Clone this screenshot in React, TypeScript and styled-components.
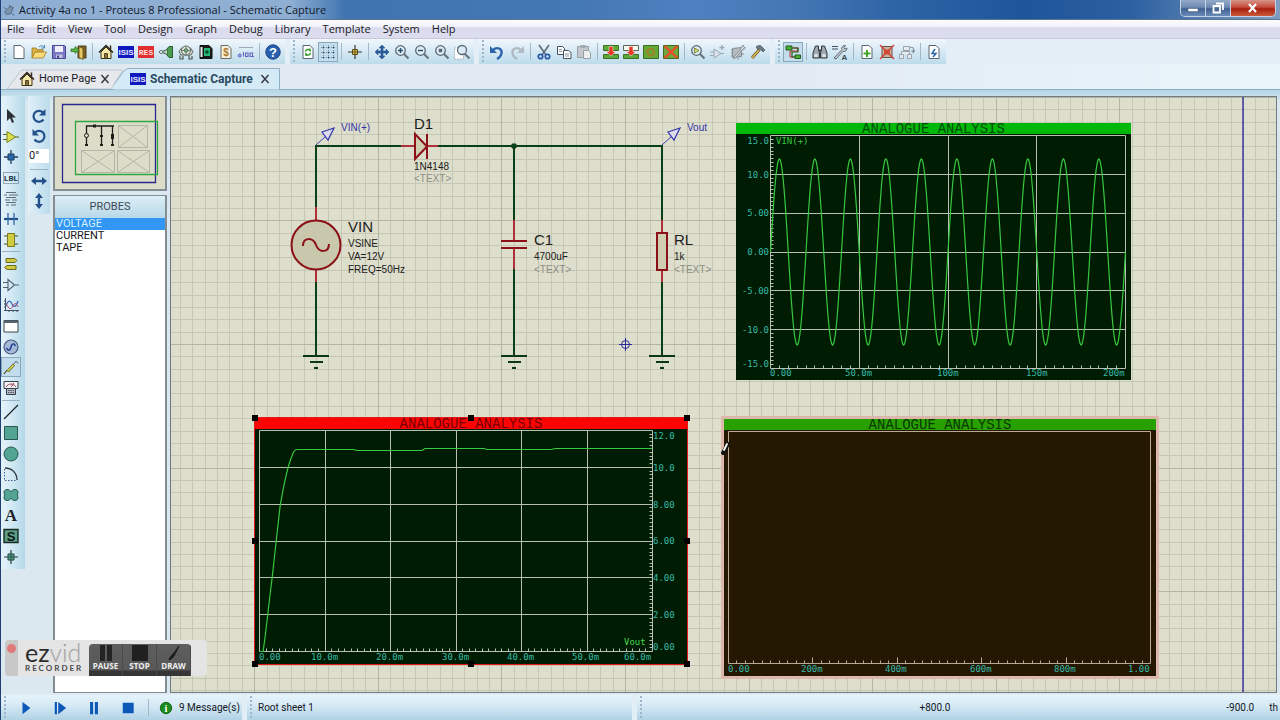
import React from "react";
import styled, { createGlobalStyle, css } from "styled-components";

const ui = `"Open Sans", "Noto Sans", sans-serif`;
const narrow = `Roboto, "Liberation Sans", sans-serif`;
const sheetFont = `"Liberation Sans", Arial, sans-serif`;

const GlobalStyle = createGlobalStyle`
  * { box-sizing: border-box; }
  html, body { margin: 0; padding: 0; }
  body { background: #dfeaf2; font-family: ${ui}; font-size: 12px; color: #141826; }
  button, input { font: inherit; color: inherit; margin: 0; padding: 0; border: 0; background: none; }
  svg { display: block; }
`;

const Window = styled.div`
  position: relative;
  display: flex;
  flex-direction: column;
  min-height: 100vh;
  border-left: 1px solid #1f3f74;
  overflow: hidden;
`;

const TitleBar = styled.header`
  position: relative;
  display: flex;
  align-items: center;
  height: 20px;
  padding-left: 1px;
  gap: 3px;
  border-bottom: 1px solid #5b7492;
  background: linear-gradient(90deg, #8fb0d4 0, #8eaed2 290px, #3f74b0 345px, #4478b4 45%, #4f80c0 54%, #4577b4 62%, #2d64a6 70%, #1f569a 80%, #2a5fa0 88%, #7f9cc0 100%);
`;
const TitleText = styled.h1`
  margin: 0;
  font-size: 11px;
  line-height: 18px;
  font-weight: 400;
  font-family: ${ui};
  color: #10182a;
`;
const WindowControls = styled.div`
  display: flex;
  align-self: flex-start;
  margin-left: auto;
  margin-right: 4px;
  border: 1px solid #c4d2e4;
  border-top: 0;
  border-radius: 0 0 5px 5px;
  overflow: hidden;
`;
const ControlButton = styled.button<{ $close?: boolean }>`
  display: grid;
  place-items: center;
  height: 16px;
  width: ${(p) => (p.$close ? 44 : 25)}px;
  border-right: ${(p) => (p.$close ? 0 : "1px solid #c4d2e4")};
  background: ${(p) =>
    p.$close
      ? "linear-gradient(#d79488, #c4493a 45%, #a8200f 55%, #cc5a3a)"
      : "linear-gradient(#93a9c8, #6f8bb4 45%, #405f92 55%, #6a8cb8)"};
`;

const MenuBar = styled.nav`
  display: flex;
  height: 19px;
  align-items: center;
  padding-left: 6px;
  gap: 12px;
  background: linear-gradient(#fcfcfe 0, #f2f2fa 35%, #dadcee 45%, #dcdef0 100%);
  border-bottom: 1px solid #c8c8da;
`;
const MenuItem = styled.button`
  font-size: 11px;
  line-height: 18px;
  font-family: ${ui};
  color: #1a1a24;
`;

const ToolRow = styled.div`
  display: flex;
  gap: 5px;
  height: 25px;
  background: #e4eef6;
`;
const dots = css`
  background-image: radial-gradient(circle, #9fb6c8 1px, transparent 1px);
  background-size: 4px 4px;
`;
const Grip = styled.span`
  flex: none;
  width: 4px;
  height: 100%;
  margin: 0 2px;
  ${dots}
`;
const ToolGroup = styled.div`
  display: flex;
  align-items: center;
  padding-right: 2px;
  background: linear-gradient(#f0f7fc 0, #d8eaf5 45%, #bddbea 100%);
`;
const ToolButton = styled.button<{ $pressed?: boolean }>`
  display: grid;
  place-items: center;
  width: 20px;
  height: 20px;
  flex: none;
  ${(p) => p.$pressed && css`background: #c3ddec; box-shadow: inset 0 0 0 1px #8aa8bc;`}
`;
const Divider = styled.span`
  flex: none;
  width: 1px;
  height: 17px;
  margin: 0 3px;
  background: #a3b8c6;
`;

const TabRow = styled.div`
  display: flex;
  align-items: flex-end;
  height: 26px;
  padding-left: 6px;
  background: linear-gradient(90deg, #dfe8ef, #e2ebf3 60%, #eaf4fb);
  border-bottom: 1px solid #8fb0c4;
`;
const Tab = styled.div<{ $active?: boolean }>`
  position: relative;
  display: flex;
  align-items: center;
  justify-content: space-between;
  height: ${(p) => (p.$active ? 22 : 20)}px;
  width: ${(p) => (p.$active ? 166 : 107)}px;
  padding-left: ${(p) => (p.$active ? 16 : 12)}px;
  padding-right: ${(p) => (p.$active ? 8 : 2)}px;
  margin-bottom: ${(p) => (p.$active ? -1 : 0)}px;
`;
const TabShape = styled.svg`
  position: absolute;
  inset: 0;
`;
const TabLabel = styled.button<{ $active?: boolean }>`
  position: relative;
  display: flex;
  align-items: center;
  gap: 4px;
  font-family: ${narrow};
  font-size: ${(p) => (p.$active ? 12 : 11)}px;
  line-height: 18px;
  font-weight: ${(p) => (p.$active ? 700 : 400)};
  color: ${(p) => (p.$active ? "#2a4a60" : "#1c2028")};
  white-space: nowrap;
`;
const CloseTab = styled.button`
  position: relative;
  display: grid;
  place-items: center;
  width: 14px;
  height: 14px;
`;

const Workspace = styled.main`
  display: flex;
  flex: 1;
  min-height: 560px;
  padding-top: 6px;
  background: linear-gradient(#b4d6e6 0, #c4dcea 5px, #dce8f0 12px);
`;
const ModeStrip = styled.div`
  display: flex;
  flex-direction: column;
  justify-content: space-between;
  align-items: center;
  align-self: flex-start;
  width: 24px;
  height: 473px;
  padding: 10px 4px 2px 0;
  background: linear-gradient(90deg, #e4f2fa 0, #d4eaf5 40%, #b4d8e8 100%);
`;
const StripRule = styled.span`
  width: 18px;
  height: 1px;
  flex: none;
  margin: 1px 0;
  background: #98b4c4;
`;
const RotateStrip = styled.div`
  display: flex;
  flex-direction: column;
  align-items: center;
  align-self: flex-start;
  width: 22px;
  margin: 0 3px;
  padding: 10px 0 3px;
  background: linear-gradient(90deg, #e0f0f8, #bcdcec);
`;
const AngleInput = styled.input`
  width: 20px;
  height: 14px;
  margin: 3px 0 5px;
  background: #fff;
  font-family: ${narrow};
  font-size: 11px;
  line-height: 14px;
`;

const SidePanel = styled.aside`
  display: flex;
  flex-direction: column;
  width: 114px;
  gap: 4px;
`;
const Overview = styled.div`
  height: 95px;
  border: 1px solid #848c94;
  border-width: 1px 2px 2px;
  background: #dcdcc8;
`;
const PickList = styled.section`
  flex: 1;
  display: flex;
  flex-direction: column;
  border: 1px solid #848c94;
  border-width: 1px 2px;
  background: #fff;
`;
const PickHeader = styled.h2`
  margin: 0;
  height: 22px;
  font-family: ${narrow};
  font-size: 11px;
  line-height: 21px;
  font-weight: 400;
  text-align: center;
  color: #3e4854;
  background: linear-gradient(#dceef7, #b8d8e8);
`;
const PickItem = styled.button<{ $selected?: boolean }>`
  display: block;
  width: 100%;
  height: 12px;
  padding-left: 1px;
  text-align: left;
  font-family: ${narrow};
  font-size: 11px;
  line-height: 12px;
  color: ${(p) => (p.$selected ? "#d8f0ff" : "#16161a")};
  background: ${(p) => (p.$selected ? "#3296f4" : "transparent")};
`;

const Sheet = styled.section`
  position: relative;
  flex: 1;
  margin: 0 3px;
  border: 1px solid #707a80;
  background: #dedecc;
  overflow: hidden;
`;
const SheetDrawing = styled.svg`
  position: absolute;
  inset: 0;
  font-family: ${sheetFont};
`;

type Tone = { bar: string; ink: string; back: string; edge?: string; halo?: string };
const GraphBox = styled.figure<{ $x: number; $y: number; $w: number; $tone: Tone }>`
  position: absolute;
  left: ${(p) => p.$x}px;
  top: ${(p) => p.$y}px;
  width: ${(p) => p.$w}px;
  margin: 0;
  background: ${(p) => p.$tone.back};
  ${(p) => p.$tone.edge && css`outline: 1px solid ${p.$tone.edge};`}
  ${(p) => p.$tone.halo && css`box-shadow: 0 0 0 3px ${p.$tone.halo};`}
`;
const GraphTitle = styled.figcaption<{ $tone: Tone }>`
  height: 11px;
  font-family: "Liberation Mono", monospace;
  font-size: 14px;
  line-height: 12px;
  text-align: center;
  color: ${(p) => p.$tone.ink};
  background: ${(p) => p.$tone.bar};
`;
const Plot = styled.svg`
  overflow: visible;
  font-family: "DejaVu Sans Mono", monospace;
  font-size: 9px;
`;
const Handle = styled.span<{ $x: number; $y: number }>`
  position: absolute;
  left: ${(p) => p.$x}%;
  top: ${(p) => p.$y}%;
  width: 6px;
  height: 6px;
  margin: -3px 0 0 -3px;
  background: #000;
`;

const StatusBar = styled.footer`
  display: flex;
  height: 25px;
  margin-top: 2px;
  background: #e2eef6;
  font-family: ${narrow};
  font-size: 12px;
`;
const StatusPane = styled.div<{ $w?: number }>`
  display: flex;
  align-items: center;
  flex: ${(p) => (p.$w ? "none" : "1")};
  width: ${(p) => (p.$w ? p.$w + "px" : "auto")};
  margin-right: ${(p) => (p.$w ? 5 : 0)}px;
  background: linear-gradient(#e6f4fb 0, #d4e8f4 45%, #b0d2e4 100%);
`;
const SimButton = styled.button`
  display: grid;
  place-items: center;
  flex: none;
  width: 34px;
  height: 20px;
`;
const MessageButton = styled.button`
  display: flex;
  align-items: center;
  gap: 6px;
  margin-left: 7px;
  font-size: 10px;
  white-space: nowrap;
`;
const StatusText = styled.span<{ $gap?: number }>`
  font-size: 10px;
  margin-left: 3px;
  margin-right: ${(p) => p.$gap ?? 0}px;
  white-space: nowrap;
`;
const Coordinates = styled.div`
  display: flex;
  flex: 1;
  align-items: center;
  justify-content: flex-end;
`;

const Recorder = styled.div`
  position: absolute;
  left: 4px;
  bottom: 44px;
  display: flex;
  width: 202px;
  height: 36px;
  border-radius: 4px;
  background: #e4e4e4;
  overflow: hidden;
`;
const RecordLamp = styled.div`
  width: 13px;
  background: #c8c8c8;
  padding: 4px 2px;
`;
const Lamp = styled.span`
  display: block;
  width: 9px;
  height: 9px;
  border-radius: 50%;
  background: #e27a7c;
`;
const Brand = styled.div`
  width: 71px;
  padding-left: 7px;
  font-family: Lato, sans-serif;
  color: #2c2c2c;
`;
const BrandName = styled.div`
  font-size: 25px;
  line-height: 24px;
  height: 24px;
  span { color: #a0a0a0; font-weight: 300; }
`;
const BrandSub = styled.div`
  font-size: 8px;
  line-height: 8px;
  font-weight: 700;
  letter-spacing: 2px;
  color: #4a4a4a;
`;
const RecorderKeys = styled.div`
  display: flex;
  height: 32px;
  margin-top: 4px;
  border-radius: 4px 4px 0 0;
  background: linear-gradient(#5e5e5e 0, #585858 26px, #363636 27px);
  overflow: hidden;
`;
const RecorderKey = styled.button`
  display: flex;
  flex-direction: column;
  align-items: center;
  width: 34px;
  padding-top: 1px;
  font-family: "Open Sans", sans-serif;
  font-size: 8px;
  line-height: 9px;
  font-weight: 700;
  color: #f0f0f0;
  border-right: 1px solid #4a4a4a;
`;

/* ---------- icons, all on a 16 x 16 box ---------- */

const IconSvg = styled.svg`
  overflow: visible;
`;
const Ico = ({ children, size = 16 }: { children: React.ReactNode; size?: number }) => (
  <IconSvg width={size} height={size} viewBox="0 0 16 16" fill="none" aria-hidden="true">
    {children}
  </IconSvg>
);
const page = <path d="M3 1.5h7l3 3v10H3z" fill="#fff" stroke="#5a6670" />;
const lens = (
  <>
    <path d="M9.5 9.5l5 5" stroke="#6a7680" strokeWidth="2.2" />
    <circle cx="6.5" cy="6.5" r="4.8" fill="#dcecf4" stroke="#5c6a76" strokeWidth="1.3" />
  </>
);
const badge = (text: string, y: number, size: number, fill: string, family = "Liberation Sans") => (
  <text x="8" y={y} fontSize={size} fontWeight="700" fontFamily={family} textAnchor="middle" fill={fill}>
    {text}
  </text>
);

const icons: Record<string, React.ReactNode> = {
  new: page,
  open: (
    <>
      <path d="M1 4h4l1.500 1.500H12V8H5l-4 6z" fill="#d8b048" stroke="#a07820" strokeWidth=".8" />
      <path d="M4 8h11.500l-3.500 6H1z" fill="#f8dc78" stroke="#a07820" strokeWidth=".8" />
      <path d="M8 3c2-2 4-1.500 5 .5M13.500 1v3h-3" stroke="#4080b0" />
    </>
  ),
  save: (
    <>
      <path d="M1.500 1.500h12l1 1v12h-13z" fill="#7a78c4" stroke="#4a4890" />
      <path d="M4 2h8v6H4z" fill="#eef0fa" />
      <path d="M5 10.500h6.500V14H5z" fill="#c0c4e0" />
      <path d="M6 11.500h2V14H6z" fill="#4a4890" />
    </>
  ),
  exit: (
    <>
      <path d="M7 2h8v12H7z" fill="#7a6428" stroke="#4c3c14" />
      <path d="M8 2.500l4 2v11l-4-2z" fill="#e8c860" stroke="#5c4a18" strokeWidth=".8" />
      <path d="M0 5h4V2.500L8 6 4 9.500V7.500H0z" fill="#58b840" stroke="#2e7020" strokeWidth=".8" />
    </>
  ),
  home: (
    <>
      <path d="M3 8v6.500h10V8L8 3z" fill="#f4e8a8" stroke="#3a3018" />
      <path d="M1 8.500l7-7 7 7" stroke="#2a2416" strokeWidth="1.500" />
      <path d="M12.500 1.500v4" stroke="#3a3018" strokeWidth="1.500" />
      <path d="M6.500 9.500h3v5h-3z" fill="#8a6c38" stroke="#3a3018" strokeWidth=".8" />
    </>
  ),
  isis: (
    <>
      <path d="M0 2h16v12H0z" fill="#1018c0" />
      {badge("ISIS", 11, 8, "#e4e8ff")}
    </>
  ),
  ares: (
    <>
      <path d="M0 2h16v12H0z" fill="#e03030" />
      {badge("RES", 11, 8, "#ffdcdc", "Liberation Mono")}
    </>
  ),
  viewer: (
    <>
      <path d="M11 2.500h3.500v11H11l-2-2.500V5z" fill="#4c9c50" stroke="#2c5c30" />
      <path d="M9 5.500L3 8l6 2.500" fill="#b8ccc0" stroke="#4c5c54" />
      <path d="M1 8c1.500-2 3-2 4 0-1 2-2.500 2-4 0z" fill="#e8f0f0" stroke="#3c4c54" />
    </>
  ),
  gerber: (
    <>
      <path d="M4 3.500h8l3 4-2 3.500H3L1 7.500z" fill="#d4dcd4" stroke="#5c645c" />
      <circle cx="8" cy="6.500" r="4.500" fill="#e0e4e0" stroke="#5c645c" />
      <path d="M8 2v9M3.500 6.500h9" stroke="#6c7c6c" strokeWidth=".9" />
      <circle cx="8" cy="6.500" r="1.800" fill="#7cb484" stroke="#3c5c3c" strokeWidth=".8" />
      <path d="M2 11.500v3.500h3v-3M11 11.500v3.500h3v-3" stroke="#4c544c" strokeWidth="1.200" />
    </>
  ),
  explorer: (
    <>
      <path d="M2 1.500h9l3 3v10H2z" fill="#151a18" stroke="#101010" />
      <path d="M6 4h6v8H6z" fill="#28b878" />
      <circle cx="9" cy="8" r="1.800" fill="#08482c" />
      <path d="M2.500 3h2v10h-2z" fill="#e8ece8" />
    </>
  ),
  bom: (
    <>
      <path d="M3 1.500h7l3 3v10H3z" fill="#f4f0e0" stroke="#6a6a60" />
      {badge("$", 12, 10, "#b07828")}
    </>
  ),
  code: (
    <>
      <path d="M1 3.500h14" stroke="#a0a8b4" />
      <path d="M0 12.500c1-3 3-3 3-1s-2 2-2 0M5.500 8v4.500M7.500 9h2.500v3.500H7.500zM12 9h2.500v3.500H12zM12 12.500h4" stroke="#6468c0" strokeWidth="1.100" />
    </>
  ),
  help: (
    <>
      <circle cx="8" cy="8" r="7.200" fill="#2860b0" stroke="#184080" />
      {badge("?", 12.5, 13, "#fff")}
    </>
  ),
  refresh: (
    <>
      {page}
      <path d="M5.500 7.500c.5-2 3-2.800 4.500-1V4.500M10.500 9c-.5 2-3 2.800-4.500 1v2" stroke="#3c9c30" strokeWidth="1.500" />
    </>
  ),
  grid: (
    <>
      <path d="M1 3.500h14M1 8.500h14M1 13.500h14M3.500 1v14M8.500 1v14M13.500 1v14" stroke="#7c98b0" strokeDasharray="1 1.500" />
      <path d="M3 3h1v1H3zM8 3h1v1H8zM13 3h1v1h-1zM3 8h1v1H3zM8 8h1v1H8zM13 8h1v1h-1zM3 13h1v1H3zM8 13h1v1H8zM13 13h1v1h-1z" fill="#1c3450" stroke="#1c3450" strokeWidth=".4" />
    </>
  ),
  origin: (
    <>
      <path d="M8 1v14M1 8h14" stroke="#3c3828" strokeWidth="1.200" />
      <path d="M5.500 5.500h5v5h-5z" fill="#d8b848" stroke="#5c4c18" />
      <path d="M8 6v4M6 8h4" stroke="#5c4c18" strokeWidth=".8" />
    </>
  ),
  pan: (
    <path d="M8 1l3 3H9v3h3V5l3 3-3 3V9H9v3h2l-3 3-3-3h2V9H4v2L1 8l3-3v2h3V4H5z" fill="#2a5c98" stroke="#2a5c98" strokeWidth=".6" />
  ),
  zoomIn: <>{lens}<path d="M4 6.500h5M6.500 4v5" stroke="#2c4c6c" strokeWidth="1.400" /></>,
  zoomOut: <>{lens}<path d="M4 6.500h5" stroke="#2c4c6c" strokeWidth="1.400" /></>,
  zoomAll: <>{lens}<path d="M4.800 4.800h3.400v3.400H4.800z" fill="#56646e" /></>,
  zoomArea: (
    <>
      <path d="M.5 4h9v11h-9z" fill="#fff" stroke="#a0acb4" strokeDasharray="1.500 1" />
      <path d="M10.500 9.500l5 5" stroke="#6a7680" strokeWidth="2.200" />
      <circle cx="8" cy="6" r="4.500" fill="#dcecf4" stroke="#5c6a76" strokeWidth="1.300" />
    </>
  ),
  undo: (
    <>
      <path d="M4 6c4-4 9.500-1 8.500 3.500-.5 2.500-2 4-4.500 5.500" stroke="#2c64ac" strokeWidth="2.300" />
      <path d="M1 2v7h7z" fill="#2c64ac" />
    </>
  ),
  redo: (
    <>
      <path d="M12 6C8 2 2.500 5 3.500 9.500 4 12 5.500 13.500 8 15" stroke="#b0bac2" strokeWidth="2.300" />
      <path d="M15 2v7H8z" fill="#b0bac2" />
    </>
  ),
  cut: (
    <>
      <path d="M3 1l7 10M13 1L6 11" stroke="#5c6c7c" strokeWidth="1.600" />
      <circle cx="4.500" cy="12.500" r="2.200" stroke="#2c5ca8" strokeWidth="1.800" />
      <circle cx="11.500" cy="12.500" r="2.200" stroke="#2c5ca8" strokeWidth="1.800" />
    </>
  ),
  copy: (
    <>
      <path d="M1.500 2.500h5l2 2v6h-7z" fill="#fff" stroke="#44505c" />
      <path d="M7.500 6.500h5l2.500 2v6H7.500z" fill="#fff" stroke="#44505c" />
      <path d="M3 5.500h3M3 7.500h3M9 10h4M9 12h4" stroke="#8c98a4" />
    </>
  ),
  paste: (
    <>
      <path d="M1.500 2.500h11v11h-11z" fill="#c4c8cc" stroke="#98a0a4" />
      <path d="M4.500 1h5v3h-5z" fill="#a4aab0" />
      <path d="M7.500 6.500h5l2 2v6h-7z" fill="#eceef0" stroke="#98a0a4" />
    </>
  ),
  blockCopy: (
    <>
      <path d="M.5 1.500h15v5H.5zM.5 10.500h15v4H.5z" fill="#5ca838" stroke="#3c7020" />
      <path d="M6 2.500h4v5h3L8 12 3 7.500h3z" fill="#e83824" stroke="#fff" strokeWidth=".5" />
    </>
  ),
  blockMove: (
    <>
      <path d="M.5 1.500h15v5H.5z" fill="#f4f8f0" stroke="#5c6c54" />
      <path d="M.5 10.500h15v4H.5z" fill="#5ca838" stroke="#3c7020" />
      <path d="M6 2.500h4v5h3L8 12 3 7.500h3z" fill="#e83824" stroke="#fff" strokeWidth=".5" />
    </>
  ),
  blockRotate: (
    <>
      <path d="M.5 1.500h15v13H.5z" fill="#64a838" stroke="#3c6c20" />
      <path d="M4.500 10.500c4 3 7.500 0 6.500-3s-4-3.500-6-1.500" stroke="#a87c20" strokeWidth="1.600" />
      <path d="M3 5v4h4z" fill="#a87c20" />
    </>
  ),
  blockDelete: (
    <>
      <path d="M.5 1.500h15v13H.5z" fill="#6ca83c" stroke="#3c6c20" />
      <path d="M1.500 2l13 12M14.500 2l-13 12" stroke="#f04828" strokeWidth="2.200" />
    </>
  ),
  pick: (
    <>
      {lens}
      <path d="M4.500 4v5l4.500-2.500z" fill="#dce060" stroke="#6c7430" strokeWidth=".8" />
    </>
  ),
  make: (
    <>
      <path d="M4 5v9l7-4.500zM0 8h4M0 11.500h4M11 9.500h3" fill="#dce4ea" stroke="#9ca8b2" />
      <path d="M12 1v5M9.500 3.500h5" stroke="#9ca8b2" strokeWidth="1.400" />
    </>
  ),
  packaging: (
    <>
      <path d="M2.500 4.500l9-1v9l-9 1z" fill="#b4bac0" stroke="#848c94" />
      <path d="M1 6h2M1 9h2M1 12h2M11 10h3M4 14v1.500M8 14v1.500" stroke="#848c94" />
      <path d="M4 13l7-8c-.5-2 1-4 3-3.500L12.500 3.500l1 1L15 3c.5 2-1.500 3.500-3 3l-6.500 8z" fill="#dce0e4" stroke="#7c848c" strokeWidth=".8" />
    </>
  ),
  decompose: (
    <>
      <path d="M2 14l7.500-8.500" stroke="#6c5420" strokeWidth="3" />
      <path d="M2 14l7.500-8.500" stroke="#e0c060" strokeWidth="1.400" />
      <path d="M6 3c2-2 5-2 6 0l3 3-2 2-3-3-2 1z" fill="#6c7a84" stroke="#38444c" strokeWidth=".6" />
    </>
  ),
  wire: (
    <>
      <path d="M3 4h10v3H5v6h9" stroke="#c82828" />
      <path d="M1 2h6v4H1zM10 11h5.500v3.500H10z" fill="#48b038" stroke="#205c18" />
      <path d="M8 4h5v4H7v5h3" stroke="#205c18" strokeWidth="1.200" />
    </>
  ),
  find: (
    <>
      <path d="M3.500 2h3v4l1 3v5H1V9zM12.500 2h-3v4l-1 3v5H15V9z" fill="#a0a8b0" stroke="#30383e" />
      <path d="M2.500 10h3v3h-3zM10.500 10h3v3h-3z" fill="#e4e8ec" />
      <path d="M7 6.500h2" stroke="#30383e" strokeWidth="2" />
    </>
  ),
  property: (
    <>
      <path d="M0 2.500h6M0 5h6" stroke="#44505a" strokeWidth="1.200" />
      <path d="M2 14l8-8.500c-1-2 1-4.500 3.500-4L12 3.500l1 1.500 2-1c0 2.500-2 4-4 3.200L4 15z" fill="#c8d0d6" stroke="#505c66" strokeWidth=".9" />
      <text x="9.500" y="15.500" fontSize="8" fontWeight="700" fontFamily="Liberation Sans" fill="#404850">A</text>
    </>
  ),
  newSheet: <>{page}<path d="M8 6v7M4.500 9.500h7" stroke="#40a828" strokeWidth="2" /></>,
  removeSheet: (
    <>
      <path d="M3 2.500h10v11H3z" fill="#c4b4a0" stroke="#6c5048" />
      <path d="M5 5.500h6v5H5z" fill="#e05040" />
      <path d="M1 1l14 14M15 1L1 15" stroke="#d04838" strokeWidth="1.500" />
    </>
  ),
  exitSheet: (
    <>
      <path d="M4.500 2.500h6v4h-6zM.5 10.500h4v4h-4zM8.500 10.500h4v4h-4zM2.500 10.500v-3h8v3" fill="#e8ecf0" stroke="#98a4ae" />
      <path d="M11 3.500c3-1 4 1 3.500 4M12.500 6.500l2 2 1.200-2.500" stroke="#8894a0" strokeWidth="1.200" />
    </>
  ),
  erc: <>{page}<path d="M9 5L6 9.500h4L7 13" stroke="#2868a8" strokeWidth="1.500" /></>,

  select: <path d="M4 1v12l3-3 2 5 2-1-2-4.500h4z" fill="#2c3036" />,
  component: (
    <>
      <path d="M0 5.500h4M0 10.500h4M12 8h4" stroke="#5c6420" />
      <path d="M4 2.500v11L12.500 8z" fill="#dce048" stroke="#7c8420" />
    </>
  ),
  junction: (
    <>
      <path d="M8 1v14M1 8h14" stroke="#1c3c60" strokeWidth="1.300" />
      <path d="M5 5h6v6H5z" fill="#2868a8" stroke="#1c3c60" />
    </>
  ),
  label: (
    <>
      <path d="M.5 2.500h15v11H.5z" stroke="#4c6478" strokeDasharray="1 1" />
      {badge("LBL", 11, 8, "#20384c", "Roboto")}
    </>
  ),
  script: <path d="M3 1.500h10M1 4h3m2 0h9M3 6.500h10M2 9h5m2 0h5M3 11.500h10M3 14h3m2 0h5" stroke="#5c6c78" strokeWidth="1.100" />,
  bus: (
    <>
      <path d="M1 8h14" stroke="#20508c" strokeWidth="2.200" />
      <path d="M5 2v6M11 2v6M5 8v6M11 8v6" stroke="#3868a0" strokeWidth="1.300" />
    </>
  ),
  subcircuit: (
    <>
      <path d="M1 4h14M1 12h14" stroke="#4c5420" />
      <path d="M4.500 1.500h7v13h-7z" fill="#d0cc40" stroke="#7c7820" />
    </>
  ),
  terminal: (
    <>
      <path d="M3 2.500h9l2 2-2 2H3z" fill="#ccc840" stroke="#706c20" />
      <path d="M13 9.500H4l-2.500 2 2.500 2h9z" fill="#ccc840" stroke="#706c20" />
    </>
  ),
  pin: <path d="M5 2.500v11L11.500 8zM0 5.500h5M0 10.500h5M11.500 8H16" stroke="#4c6070" strokeWidth="1.100" />,
  graph: (
    <>
      <path d="M2.500 1v13M1 13.500h15M1 4h2M1 7h2M1 10h2M6 13v2M10 13v2M14 13v2" stroke="#405060" />
      <path d="M3 9c2-6 4-6 6-2s4 3 6-3" stroke="#3860b0" strokeWidth="1.200" />
      <path d="M3 6c3 7 5 7 7 3s3-3 5 1" stroke="#b05070" />
    </>
  ),
  popup: (
    <>
      <path d="M1 2.500h14v11.500H1z" fill="#fff" stroke="#38444c" />
      <path d="M1 2.500h14v2.500H1z" fill="#58646e" />
    </>
  ),
  generator: (
    <>
      <circle cx="8" cy="8" r="7" fill="#a4b8d8" stroke="#4c5c80" strokeWidth="1.200" />
      <path d="M3.500 9c1.500 3 3.500 3 4.500-1s3-4 4.500-1" stroke="#1c3c90" strokeWidth="1.500" />
    </>
  ),
  probe: (
    <>
      <path d="M1 15l3-4" stroke="#4c5018" strokeWidth="1.200" />
      <path d="M4 11.500L10 5l1.500 1.500L5.500 13z" fill="#dcdc60" stroke="#686820" />
      <path d="M10.500 5.500c1-3 4-4 4.500-1" stroke="#505858" />
    </>
  ),
  instrument: (
    <>
      <path d="M1 1.500h14v7H1z" fill="#f4f4f8" stroke="#38404c" />
      <path d="M3 7c2.500-4 7.500-4 10 0M8 7l3-4" stroke="#98404c" />
      <path d="M3.500 8.500h9v6h-9z" fill="#b4bac4" stroke="#38404c" />
      <path d="M5 10.500h6M5 12.500h6" stroke="#505a66" strokeDasharray="1.500 .8" />
    </>
  ),
  line: <path d="M1 15L15 1" stroke="#202428" strokeWidth="1.300" />,
  box: <path d="M1.500 1.500h13v13h-13z" fill="#54a494" stroke="#28584e" />,
  circle: <circle cx="8" cy="8" r="7" fill="#54a494" stroke="#28584e" />,
  arc: (
    <>
      <path d="M2 2c7 0 12 5 12 12" stroke="#283038" strokeWidth="1.300" />
      <path d="M1.500 3v11.500H14" stroke="#406090" strokeDasharray="1.500 1.500" />
    </>
  ),
  path2d: (
    <path d="M8 5C6.800 1.500 1 1.800 1 5.200c0 1.300.6 2 .6 2.800S1 9.500 1 10.800C1 14.200 6.800 14.500 8 11c1.200 3.500 7 3.200 7-.2 0-1.300-.6-2-.6-2.800s.6-1.500.6-2.800C15 1.800 9.200 1.500 8 5z" fill="#54a494" stroke="#28584e" />
  ),
  text: badge("A", 14, 17, "#202428", "Liberation Serif"),
  symbol: (
    <>
      <path d="M1 1.500h14v13H1z" fill="#5c9c84" stroke="#182c24" strokeWidth="1.400" />
      {badge("S", 13, 13, "#0c1814")}
    </>
  ),
  marker: (
    <>
      <path d="M8 1v14M1 8h14" stroke="#204038" strokeWidth="1.200" />
      <path d="M5 5h6v6H5z" fill="#54a494" stroke="#204038" />
      <path d="M8 5.500v5M5.500 8h5" stroke="#204038" strokeWidth=".8" />
    </>
  ),
  cw: (
    <>
      <path d="M12 4.500A5.500 5.500 0 1 0 12.500 11.500" stroke="#24508c" strokeWidth="2.200" />
      <path d="M14.500 1v6.500H8z" fill="#24508c" />
    </>
  ),
  ccw: (
    <>
      <path d="M4 4.500A5.500 5.500 0 1 1 3.500 11.500" stroke="#24508c" strokeWidth="2.200" />
      <path d="M1.500 1v6.500H8z" fill="#24508c" />
    </>
  ),
  mirrorX: <path d="M0 8l5-4v2.800h6V4l5 4-5 4V9.200H5V12z" fill="#24508c" />,
  mirrorY: <path d="M8 0l4 5H9.200v6H12l-4 5-4-5h2.800V5H4z" fill="#24508c" />,
  play: <path d="M4 1v14l9-7z" fill="#0c58b8" />,
  step: <path d="M2 1h2.500v14H2zM6 1v14l9-7z" fill="#0c58b8" />,
  pause: <path d="M3.500 1h3.500v14H3.500zM9 1h3.500v14H9z" fill="#0c58b8" />,
  stop: <path d="M2 2h12.500v12H2z" fill="#0c58b8" />,
  info: (
    <>
      <circle cx="8" cy="8" r="6.500" fill="#1c8c1c" stroke="#0c5c10" />
      {badge("i", 12, 12, "#fff", "Liberation Serif")}
    </>
  ),
  close: <path d="M4 3.500l8 9M12 3.500l-8 9" stroke="#30343c" strokeWidth="1.600" />,
};

/* ---------- toolbars ---------- */

const toolGroups: string[][] = [
  ["new", "open", "save", "exit", "|", "home", "isis", "ares", "viewer", "gerber", "explorer", "bom", "code", "|", "help"],
  ["refresh", "grid*", "|", "origin", "|", "pan", "zoomIn", "zoomOut", "zoomAll", "zoomArea"],
  ["undo", "redo", "|", "cut", "copy", "paste", "|", "blockCopy", "blockMove", "blockRotate", "blockDelete", "|", "pick", "make", "packaging", "decompose"],
  ["wire*", "|", "find", "property", "|", "newSheet", "removeSheet", "exitSheet", "|", "erc"],
];
const modes = [
  "select", "component", "junction", "label", "script", "bus", "subcircuit", "|",
  "terminal", "pin", "graph", "popup", "generator", "probe*", "instrument", "|",
  "line", "box", "circle", "arc", "path2d", "text", "symbol", "marker",
];

const Tool = ({ id }: { id: string }) => {
  const name = id.replace("*", "");
  return (
    <ToolButton $pressed={id.endsWith("*")} aria-label={name}>
      <Ico>{icons[name]}</Ico>
    </ToolButton>
  );
};

/* ---------- schematic sheet ---------- */

const ORIGIN = { x: 454, y: 247 };
const MAJOR = 123.6;
const REACH = 3200;

const gridPath = (major: boolean) => {
  let d = "";
  for (let k = -40; k < 260; k++) {
    if ((k % 10 === 0) !== major) continue;
    const x = Math.round(ORIGIN.x + (k * MAJOR) / 10) + 0.5;
    const y = Math.round(ORIGIN.y + (k * MAJOR) / 10) + 0.5;
    if (x > 0) d += `M${x} 0V${REACH}`;
    if (y > 0) d += `M0 ${y}H${REACH}`;
  }
  return d;
};

const Ground = ({ x }: { x: number }) => (
  <path d={`M${x - 13} 259h26M${x - 6} 265h13M${x - 2} 271h4`} stroke="#0a3814" strokeWidth="2" />
);
const Probe = ({ x, name }: { x: number; name: string }) => (
  <>
    <path d={`M${x} 48l10 -9`} stroke="#3c3cb0" strokeWidth="1" />
    <path d={`M${x + 18} 31l-12 4l6 8z`} fill="#dcdcec" stroke="#3434b0" strokeWidth="1.200" />
    <text x={x + 25} y="34" fontSize="10" fill="#3434a8">{name}</text>
  </>
);
const Part = ({ x, y, name, lines }: { x: number; y: number; name: string; lines: string[] }) => (
  <>
    <text x={x} y={y} fontSize="15" fill="#1c1c1c">{name}</text>
    {lines.map((t, i) => (
      <text key={t} x={x} y={y + 15 + i * 13} fontSize="10" fill={t === "<TEXT>" ? "#8c8c84" : "#202020"}>{t}</text>
    ))}
  </>
);

const Circuit = () => (
  <SheetDrawing width="100%" height="100%" role="img" aria-label="Half-wave rectifier schematic">
    <path d={gridPath(false)} stroke="#c6c6b4" />
    <path d={gridPath(true)} stroke="#b2b4a4" />
    <path d={`M1072 0V${REACH}`} stroke="#3c38a0" strokeWidth="1.500" />
    <g fill="none">
      <path d="M145 110V49H230M267 49H491V123M343 49V123M145 185V259M343 172V259M491 185V259" stroke="#0a4018" strokeWidth="2" />
      <path d="M230 49H244M256 49H267M145 110V124M145 172V185M343 123V144M343 151V172M491 123V136M491 172V185" stroke="#b03038" strokeWidth="2" />
      <path d="M244 37v25l12-12.500zM256 37v25" fill="#cfcdb2" stroke="#8c1018" strokeWidth="2" />
      <circle cx="145" cy="148" r="24.500" fill="#c9c8ac" stroke="#8c1018" strokeWidth="2" />
      <path d="M132 149c0-9 10-9 13-1s13 8 13-1" stroke="#8c1018" strokeWidth="2" />
      <path d="M330 144h26M330 151h26" stroke="#8c1018" strokeWidth="2" />
      <path d="M486 136h10v37h-10z" fill="#cfcdb2" stroke="#8c1018" strokeWidth="2" />
      <path d="M341 47h4v4h-4z" fill="#0a4018" stroke="#0a4018" />
      <Ground x={145} />
      <Ground x={343} />
      <Ground x={491} />
      <g stroke="#2c2c98">
        <circle cx="454.500" cy="247.500" r="4" />
        <path d="M448 247.500h13M454.500 241v13" />
      </g>
    </g>
    <Probe x={145} name="VIN(+)" />
    <Probe x={491} name="Vout" />
    <Part x={243} y={32} name="D1" lines={[]} />
    <text x="243" y="73" fontSize="10" fill="#202020">1N4148</text>
    <text x="243" y="85" fontSize="10" fill="#8c8c84">{"<TEXT>"}</text>
    <Part x={177} y={135} name="VIN" lines={["VSINE", "VA=12V", "FREQ=50Hz"]} />
    <Part x={363} y={148} name="C1" lines={["4700uF", "<TEXT>"]} />
    <Part x={503} y={148} name="RL" lines={["1k", "<TEXT>"]} />
  </SheetDrawing>
);

/* ---------- graphs ---------- */

type Frame = { l: number; t: number; r: number; b: number };
const frameD = ({ l, t, r, b }: Frame) => `M${l} ${t}H${r}V${b}H${l}z`;
const snap = (v: number) => Math.floor(v) + 0.5;
const gridD = (f: Frame, cols: number, rows: number) => {
  let d = "";
  for (let i = 1; i < cols; i++) d += `M${snap(f.l + ((f.r - f.l) * i) / cols)} ${f.t}V${f.b}`;
  for (let i = 1; i < rows; i++) d += `M${f.l} ${snap(f.t + ((f.b - f.t) * i) / rows)}H${f.r}`;
  return d;
};
const bottomTicks = (f: Frame, n: number, every = 0) => {
  let d = "";
  for (let i = 1; i < n; i++) {
    const long = every > 0 && i % every === 0;
    d += `M${snap(f.l + ((f.r - f.l) * i) / n)} ${f.b}v${long ? -6 : -3}`;
  }
  return d;
};
const sideTicks = (f: Frame, n: number, side: "l" | "r") => {
  let d = "";
  for (let i = 1; i < n; i++) d += `M${f[side]} ${snap(f.t + ((f.b - f.t) * i) / n)}h${side === "l" ? 3 : -3}`;
  return d;
};
const sine = (f: Frame, periods: number, amp: number) => {
  const mid = (f.t + f.b) / 2;
  let d = `M${f.l} ${mid}`;
  for (let i = 1; i <= 400; i++) {
    d += `L${(f.l + ((f.r - f.l) * i) / 400).toFixed(2)} ${(mid - amp * Math.sin((2 * Math.PI * periods * i) / 400)).toFixed(2)}`;
  }
  return d;
};

const axis = "#38b8a8";
const rule = "#b8c0b4";
const trace = "#38c840";

const inputTone: Tone = { bar: "#00b808", ink: "#004c08", back: "#001c02" };
const outputTone: Tone = { bar: "#fc0404", ink: "#780000", back: "#001c02", edge: "#e01818" };
const emptyTone: Tone = { bar: "#28a000", ink: "#083800", back: "#241802", halo: "#dcb8ac" };

const InputGraph = () => {
  const f = { l: 34.5, t: 1.5, r: 389.5, b: 234.5 };
  return (
    <GraphBox $x={565} $y={26} $w={395} $tone={inputTone}>
      <GraphTitle $tone={inputTone}>ANALOGUE ANALYSIS</GraphTitle>
      <Plot width="394" height="246" fill="none" role="img" aria-label="VIN(+) against time">
        <path d={frameD(f) + gridD(f, 4, 6) + bottomTicks(f, 40) + sideTicks(f, 60, "l")} stroke={rule} />
        <path d={sine(f, 10, 93)} stroke={trace} strokeWidth="1.200" />
        <g fill={axis} textAnchor="end">
          {["15.0", "10.0", "5.00", "0.00", "-5.00", "-10.0", "-15.0"].map((t, i) => (
            <text key={t} x="33" y={i === 0 ? 10 : i === 6 ? 233 : 5 + Math.round(i * 38.7)}>{t}</text>
          ))}
        </g>
        <g fill={axis}>
          <text x="34" y="242">0.00</text>
          <text x="109" y="242">50.0m</text>
          <text x="201" y="242">100m</text>
          <text x="290" y="242">150m</text>
          <text x="367" y="242">200m</text>
        </g>
        <text x="40" y="10" fill={trace}>VIN(+)</text>
      </Plot>
    </GraphBox>
  );
};

const OutputGraph = () => {
  const f = { l: 4.5, t: 1.5, r: 397.5, b: 222.5 };
  return (
    <GraphBox $x={84} $y={321} $w={432} $tone={outputTone}>
      <GraphTitle $tone={outputTone}>ANALOGUE ANALYSIS</GraphTitle>
      <Plot width="432" height="235" fill="none" role="img" aria-label="Vout against time">
        <path d={frameD(f) + gridD(f, 6, 6) + bottomTicks(f, 60) + sideTicks(f, 60, "r")} stroke={rule} />
        <path
          d="M4.500 222.500H8C10 212 12 190 17 150L25 78C29 54 33 36 37 27Q39 20.500 42 20.500H99L102 21.500H167L170 19.500H229L232 20.500H296L300 19.500H397"
          stroke={trace}
          strokeWidth="1.200"
        />
        <g fill={axis}>
          {["12.0", "10.0", "8.00", "6.00", "4.00", "2.00", "0.00"].map((t, i) => (
            <text key={t} x="398" y={i === 0 ? 10 : i === 6 ? 221 : 5 + Math.round(i * 36.8)}>{t}</text>
          ))}
          <text x="4" y="231">0.00</text>
          {["10.0m", "20.0m", "30.0m", "40.0m", "50.0m", "60.0m"].map((t, i) => (
            <text key={t} x={i === 5 ? 369 : 56 + Math.round(i * 65.3)} y="231">{t}</text>
          ))}
        </g>
        <text x="369" y="216" fill="#48d848">Vout</text>
      </Plot>
      {[[0, 0], [50, 0], [100, 0], [0, 50], [100, 50], [0, 100], [50, 100], [100, 100]].map(([x, y]) => (
        <Handle key={`${x}-${y}`} $x={x} $y={y} />
      ))}
    </GraphBox>
  );
};

const EmptyGraph = () => {
  const f = { l: 4.5, t: 1.5, r: 426.5, b: 233.5 };
  return (
    <GraphBox $x={553} $y={322} $w={432} $tone={emptyTone}>
      <GraphTitle $tone={emptyTone}>ANALOGUE ANALYSIS</GraphTitle>
      <Plot width="431" height="246" fill="none" role="img" aria-label="Empty graph">
        <path d={frameD(f) + bottomTicks(f, 50, 10)} stroke="#bca898" />
        <g fill={axis}>
          <text x="4" y="242">0.00</text>
          {["200m", "400m", "600m", "800m"].map((t, i) => (
            <text key={t} x={77 + Math.round(i * 84.4)} y="242">{t}</text>
          ))}
          <text x="404" y="242">1.00</text>
        </g>
        <g strokeLinecap="round">
          <path d="M-1 23L4 14" stroke="#101010" strokeWidth="4" />
          <path d="M0 20L3 14" stroke="#fff" strokeWidth="1.800" />
        </g>
      </Plot>
    </GraphBox>
  );
};

const OverviewMap = () => (
  <svg width="110" height="92" fill="none" role="img" aria-label="Sheet overview">
    <path d="M7.500 7.500h93v78h-93z" stroke="#28288c" strokeWidth="1.300" />
    <g stroke="#b4b4a8">
      <path d="M63.500 28.500h29v22h-29zM63.500 28.500l29 22M92.500 28.500l-29 22" />
      <path d="M26.500 53.500h33v22h-33zM26.500 53.500l33 22M59.500 53.500l-33 22" />
      <path d="M62.500 53.500h32v22h-32zM62.500 53.500l32 22M94.500 53.500l-32 22" />
    </g>
    <path d="M20.500 24.500h82v53h-82z" stroke="#30a840" strokeWidth="1.300" />
    <path d="M31.500 49V29H59M46.500 29v20M57.500 29v20" stroke="#1c2018" strokeWidth="1.300" />
    <path d="M38 27.500h3v3h-3zM45 38h3v2h-3zM56 37h3v5h-3zM30 47h3v2h-3zM45 47h3v2h-3zM56 47h3v2h-3z" fill="#1c2018" />
    <circle cx="31.500" cy="38.500" r="2" fill="#dcdcc8" stroke="#1c2018" />
  </svg>
);

export default function App() {
  return (
    <Window>
      <GlobalStyle />
      <TitleBar>
        <Ico size={14}>
          <path d="M3 10l6-6 4 1-3 7-5 1z" fill="#7c94ac" stroke="#4c6078" />
          <path d="M2 5l3 2M11 12l3 2M9 2v3" stroke="#4c6078" />
        </Ico>
        <TitleText>Activity 4a no 1 - Proteus 8 Professional - Schematic Capture</TitleText>
        <WindowControls>
          <ControlButton aria-label="Minimise">
            <svg width="12" height="10"><path d="M1 5.500h10v3H1z" fill="#fff" stroke="#4c5c74" strokeWidth=".5" /></svg>
          </ControlButton>
          <ControlButton aria-label="Restore">
            <svg width="12" height="12" fill="none"><path d="M4 1.500h7v6.500M1.500 4h6.500v6.500H1.500z" stroke="#fff" strokeWidth="1.800" /></svg>
          </ControlButton>
          <ControlButton $close aria-label="Close">
            <svg width="12" height="10" fill="none"><path d="M2 1l7 8M9 1L2 9" stroke="#fff" strokeWidth="2.200" /></svg>
          </ControlButton>
        </WindowControls>
      </TitleBar>

      <MenuBar>
        {["File", "Edit", "View", "Tool", "Design", "Graph", "Debug", "Library", "Template", "System", "Help"].map((m) => (
          <MenuItem key={m}>{m}</MenuItem>
        ))}
      </MenuBar>

      <ToolRow>
        {toolGroups.map((g, i) => (
          <ToolGroup key={i}>
            <Grip />
            {g.map((id, j) => (id === "|" ? <Divider key={j} /> : <Tool key={j} id={id} />))}
          </ToolGroup>
        ))}
      </ToolRow>

      <TabRow>
        <Tab>
          <TabShape width="116" height="20">
            <path d="M0 20L13 3Q14 1 17 1H116L104 20z" fill="#e6e8ec" stroke="#c0c8d0" />
          </TabShape>
          <TabLabel>
            <Ico>{icons.home}</Ico>
            Home Page
          </TabLabel>
          <CloseTab aria-label="Close Home Page"><Ico size={14}>{icons.close}</Ico></CloseTab>
        </Tab>
        <Tab $active>
          <TabShape width="166" height="22">
            <path d="M-4 21.500L10 3Q12 .5 15 .5H165.500V21.500" fill="#d4eaf6" stroke="#8fb0c4" />
          </TabShape>
          <TabLabel $active>
            <Ico>{icons.isis}</Ico>
            Schematic Capture
          </TabLabel>
          <CloseTab aria-label="Close Schematic Capture"><Ico size={14}>{icons.close}</Ico></CloseTab>
        </Tab>
      </TabRow>

      <Workspace>
        <ModeStrip>
          {modes.map((id, i) => (id === "|" ? <StripRule key={i} /> : <Tool key={i} id={id} />))}
        </ModeStrip>
        <RotateStrip>
          <Tool id="cw" />
          <Tool id="ccw" />
          <AngleInput aria-label="Rotation angle" defaultValue="0°" />
          <StripRule />
          <Tool id="mirrorX" />
          <Tool id="mirrorY" />
        </RotateStrip>
        <SidePanel>
          <Overview><OverviewMap /></Overview>
          <PickList>
            <PickHeader>PROBES</PickHeader>
            <PickItem $selected>VOLTAGE</PickItem>
            <PickItem>CURRENT</PickItem>
            <PickItem>TAPE</PickItem>
          </PickList>
        </SidePanel>
        <Sheet>
          <Circuit />
          <InputGraph />
          <OutputGraph />
          <EmptyGraph />
        </Sheet>
      </Workspace>

      <StatusBar>
        <StatusPane $w={241}>
          <Grip />
          {["play", "step", "pause", "stop"].map((id) => (
            <SimButton key={id} aria-label={id}><Ico size={14}>{icons[id]}</Ico></SimButton>
          ))}
          <Divider />
          <MessageButton><Ico size={14}>{icons.info}</Ico>9 Message(s)</MessageButton>
        </StatusPane>
        <StatusPane $w={385}>
          <Grip />
          <StatusText>Root sheet 1</StatusText>
        </StatusPane>
        <StatusPane>
          <Grip />
          <Coordinates>
            <StatusText $gap={273}>+800.0</StatusText>
            <StatusText $gap={12}>-900.0</StatusText>
            <StatusText $gap={2}>th</StatusText>
          </Coordinates>
        </StatusPane>
      </StatusBar>

      <Recorder>
        <RecordLamp><Lamp /></RecordLamp>
        <Brand>
          <BrandName>ez<span>vid</span></BrandName>
          <BrandSub>RECORDER</BrandSub>
        </Brand>
        <RecorderKeys>
          <RecorderKey>
            <svg width="16" height="16"><path d="M2 0h5v16H2zM9 0h5v16H9z" fill="#242424" /></svg>
            PAUSE
          </RecorderKey>
          <RecorderKey>
            <svg width="16" height="16"><path d="M0 0h16v16H0z" fill="#202020" /></svg>
            STOP
          </RecorderKey>
          <RecorderKey>
            <svg width="16" height="16" fill="none"><path d="M3 15c1-4 4-5 10-14-4 8-5 12-10 14z" fill="#1c1c1c" stroke="#1c1c1c" /></svg>
            DRAW
          </RecorderKey>
        </RecorderKeys>
      </Recorder>
    </Window>
  );
}
